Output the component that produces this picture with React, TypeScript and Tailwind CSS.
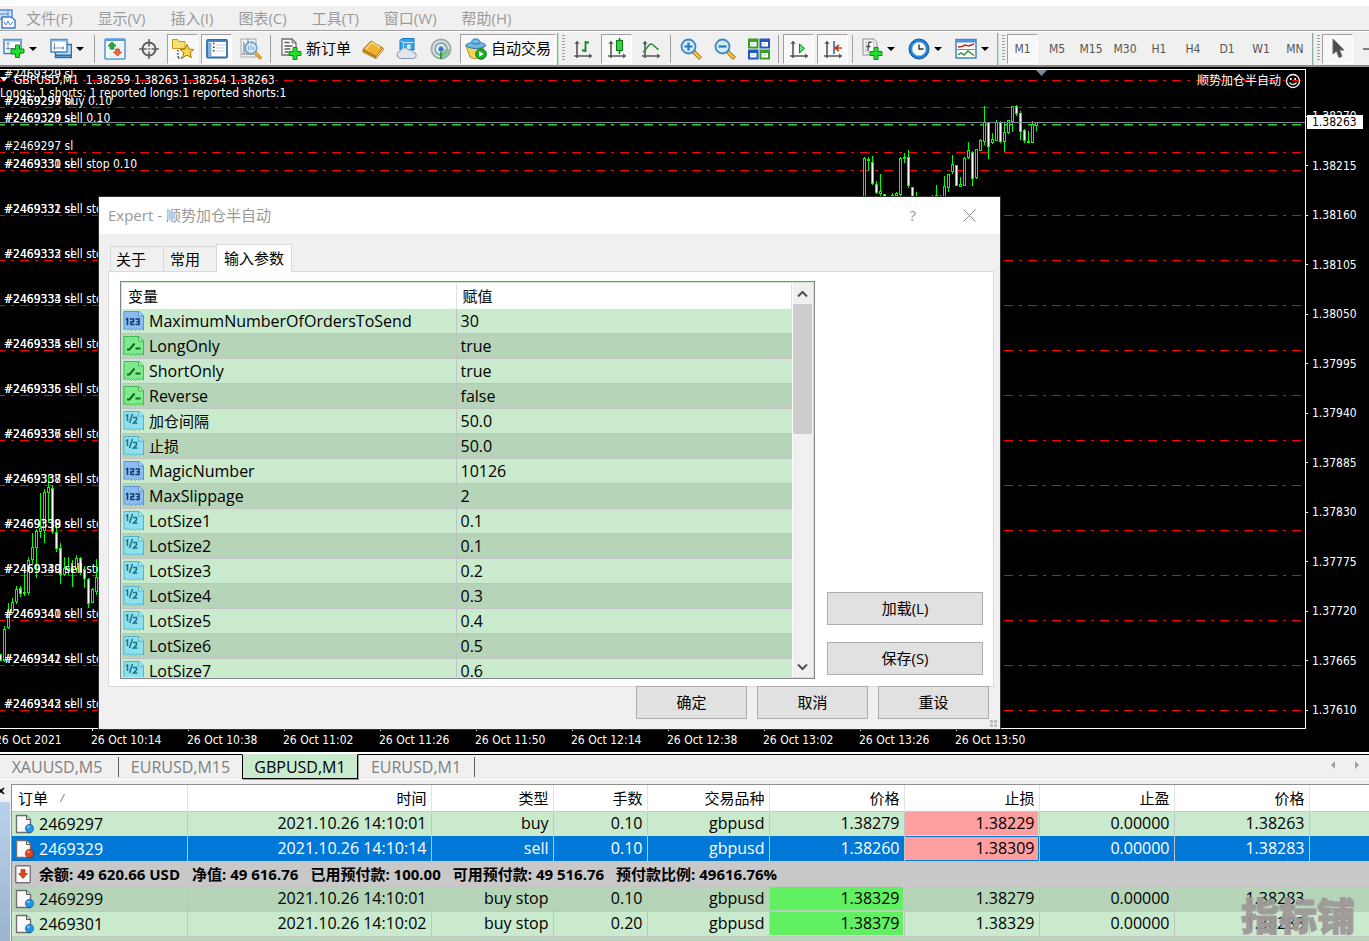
import React from "react";

const UI = "font-['Open_Sans','Noto_Sans_CJK_SC',sans-serif]";

/* ---------- toolbar icons ---------- */

function Icon({ children, label }: { children: React.ReactNode; label?: string }) {
  return (
    <svg width="22" height="22" viewBox="0 0 22 22" className="shrink-0" aria-label={label} fill="none">
      {children}
    </svg>
  );
}

function Plus({ x, y }: { x: number; y: number }) {
  return (
    <path
      transform={`translate(${x} ${y})`}
      d="M4.5 0.5h4v4h4v4h-4v4h-4v-4h-4v-4h4z"
      fill="#22dd2c"
      stroke="#0a8f14"
    />
  );
}

function Axes() {
  return (
    <g stroke="#585858" strokeWidth="1.6">
      <path d="M5 4v16M2 18h16" />
      <path d="M3 6l2-3 2 3M17 16l3 2-3 2" fill="#585858" strokeWidth="0.8" />
    </g>
  );
}

const NewChartIcon = () => (
  <Icon>
    <rect x="1" y="1.5" width="17" height="14" fill="#fff" stroke="#3a7bb8" strokeWidth="1.4" />
    <path d="M1 2.5h17" stroke="#7db5e6" strokeWidth="2" />
    <path d="M5 4.500v8M3 6.500l2-2 2 2M3 10.500h12" stroke="#6f92b5" />
    <path d="M9 13.500v-5h4.500v-4h4v4H22v4h-4.500V17h-4v-3.500z" fill="#22dd2c" stroke="#0a8f14" transform="translate(-1 2.500)" />
  </Icon>
);

const ProfilesIcon = () => (
  <Icon>
    <rect x="5.500" y="6.500" width="16" height="13" fill="#b9dbf6" stroke="#2b6cab" strokeWidth="1.4" />
    <path d="M6 17.500h15" stroke="#2b6cab" strokeWidth="2" />
    <rect x="1" y="1.500" width="16" height="12.500" fill="#fff" stroke="#3a7bb8" strokeWidth="1.4" />
    <path d="M1 2.500h16" stroke="#7db5e6" strokeWidth="2" />
    <path d="M4.500 5v7M3 10h11M12 8.500l2 1.500-2 1.500" stroke="#6f92b5" />
  </Icon>
);

const MarketWatchIcon = () => (
  <Icon>
    <rect x="1" y="1" width="20" height="20" rx="1" fill="#f7fbff" stroke="#5b9bd5" strokeWidth="1.6" />
    <path d="M1 2h20" stroke="#5b9bd5" strokeWidth="2" />
    <path d="M5 6h14M5 9h14M5 12h14M5 15h14M5 18h14" stroke="#d5e2ee" />
    <path d="M8 4l4 4H9.800v3H6.200V8H4z" fill="#25b530" stroke="#0d7d18" strokeWidth="0.8" />
    <path d="M13.500 18l4-4h-2.200v-3h-3.600v3H9.500z" fill="#f46a3a" stroke="#b93511" strokeWidth="0.8" />
  </Icon>
);

const CrosshairIcon = () => (
  <Icon>
    <circle cx="11" cy="11" r="6.500" stroke="#5e5e5e" strokeWidth="2" />
    <path d="M11 1v7.500M11 13.500V21M1 11h7.500M13.500 11H21" stroke="#5e5e5e" strokeWidth="1.600" />
    <path d="M9.500 10h3v2h-3z" fill="#9a9a9a" />
  </Icon>
);

const NavigatorIcon = () => (
  <Icon>
    <path d="M0.500 10.500V1.500h5l1.500 2h6v7z" fill="#f8df74" stroke="#c19a1c" />
    <path d="M6 12v9M6 20h5" stroke="#444" strokeDasharray="1.500 1.500" strokeWidth="1.400" />
    <path
      d="M15 6.500l2.100 4.600 4.700.5-3.600 3.300 1.200 4.800-4.400-2.500-4.400 2.500 1.200-4.800-3.600-3.300 4.700-.5z"
      fill="#f7d64b"
      stroke="#a67c08"
    />
  </Icon>
);

const TerminalIcon = () => (
  <Icon>
    <rect x="1" y="2" width="20" height="17.500" rx="1" fill="#fff" stroke="#2b6cab" strokeWidth="1.800" />
    <path d="M1.500 3.200h19" stroke="#4b8fd0" strokeWidth="1.600" />
    <path d="M2 4.500h3.500v14H2z" fill="#7fb4e4" />
    <path d="M9.500 7h9.500M9.500 10h9.500M9.500 13h9.500" stroke="#c5d0da" />
    <path d="M7 4.500h1.500v2H7z" fill="#d33" />
    <path d="M7 8.500h1.500v1.500H7zM7 12h1.500v1.500H7z" fill="#334" />
  </Icon>
);

const TesterIcon = () => (
  <Icon>
    <rect x="1" y="1" width="15" height="18" fill="#f2f2f2" stroke="#a9a9a9" />
    <path d="M4 4v11M8 1v5M12 3v4M2 16h12" stroke="#6d6d6d" />
    <circle cx="11" cy="10" r="5.800" fill="#cde9fb" fillOpacity="0.9" stroke="#6da3cf" strokeWidth="1.600" />
    <path d="M8.500 8v4M11 7v5M13.500 9v3" stroke="#7fa9c9" />
    <path d="M15.500 15l5.500 5.500" stroke="#b97f14" strokeWidth="3.200" />
    <path d="M15.500 15l5 5" stroke="#f2c44d" strokeWidth="1.400" />
  </Icon>
);

const NewOrderIcon = () => (
  <Icon>
    <path d="M2 1h10l4 4v12H2z" fill="#fff" stroke="#6c6c6c" strokeWidth="1.300" />
    <path d="M12 1v4h4" stroke="#6c6c6c" />
    <path d="M4.500 4.500h5M4.500 8h8M4.500 11h6M4.500 14h4" stroke="#5b5b5b" strokeWidth="1.300" />
    <Plus x={8.5} y={9} />
  </Icon>
);

const MetaEditorIcon = () => (
  <Icon>
    <path d="M1 11.500L9 3l12 7-7 8.500z" fill="#edb22f" stroke="#a56f0a" />
    <path d="M1 11.500l13 7v2L1 14z" fill="#d08e14" stroke="#a56f0a" strokeWidth="0.800" />
    <path d="M14 18.500l7-8.500v2.500l-7 8z" fill="#fff3c2" stroke="#a56f0a" strokeWidth="0.800" />
    <path d="M4 11l6-6.500 8 5" stroke="#f9d879" strokeWidth="1.500" />
  </Icon>
);

const CloudIcon = () => (
  <Icon>
    <path d="M4 2l3-1.500h11V12H4z" fill="#2fa3f0" stroke="#1a78c2" />
    <path d="M4.500 3l3 1.500V12" stroke="#bfe4fb" />
    <path d="M7.500 4.500h10" stroke="#bfe4fb" />
    <path d="M11 6.500h3.500V11H11z" fill="#d8f0ff" />
    <path
      d="M4.500 20.500a3.800 3.800 0 01-.3-7.500 4.500 4.500 0 018.300-1 3.500 3.500 0 014.500 2.500 3 3 0 01.5 6z"
      fill="#dfe6f0"
      stroke="#8596ad"
    />
  </Icon>
);

const SignalsIcon = () => (
  <Icon>
    <circle cx="11" cy="11" r="9.500" stroke="#9fadb0" strokeWidth="2" fill="#e6ecec" />
    <circle cx="11" cy="11" r="6" stroke="#8ba3a8" strokeWidth="1.800" />
    <path d="M11 11h9.500A9.500 9.500 0 0111 20.500z" fill="#7cc08a" fillOpacity="0.800" />
    <path d="M11 11v10" stroke="#2f9b40" strokeWidth="2" />
    <circle cx="11" cy="11" r="2.600" fill="#2f6fc4" stroke="#8fb7e6" />
  </Icon>
);

const AutoTradeIcon = () => (
  <Icon>
    <path d="M1 8l4 11c3 2 7 2 9 0l5-11z" fill="#f4d458" stroke="#b58e16" />
    <path d="M0.500 7.500C3 4 6 6 6.500 3.500 7.500 0 14 0 15 3.500c.5 2.500 4 .5 6 4-4 4-16 4-20.500 0z" fill="#6fb7e4" stroke="#2c76ab" />
    <path d="M6.500 5c2 1.500 6 1.500 8.500 0" stroke="#2c76ab" />
    <circle cx="16" cy="16" r="5.300" fill="#1fae2c" stroke="#0c7a17" />
    <path d="M14.200 13.200v5.600l4.400-2.800z" fill="#fff" />
  </Icon>
);

const BarChartIcon = () => (
  <Icon>
    <Axes />
    <path d="M13.500 3v11M13.500 4.500h3.500M10 12.500h3.500" stroke="#15832a" strokeWidth="1.800" />
  </Icon>
);
const CandleIcon = () => (
  <Icon>
    <Axes />
    <path d="M13.500 0v16" stroke="#0c7a17" strokeWidth="1.600" />
    <rect x="10.500" y="2.500" width="6" height="10" fill="#2fd43d" stroke="#0c7a17" />
  </Icon>
);
const LineChartIcon = () => (
  <Icon>
    <Axes />
    <path d="M3 14c4-2 5-8 8-8s4 4 7.500 5.500" stroke="#2a8a3a" strokeWidth="1.500" />
  </Icon>
);
const Magnifier = ({ plus }: { plus?: boolean }) => (
  <Icon>
    <path d="M13.500 13.500l7 7" stroke="#a87b12" strokeWidth="4" />
    <path d="M14 14l6 6" stroke="#f3cf4f" strokeWidth="2" />
    <circle cx="8.500" cy="8.500" r="7" fill="#d3ecfb" stroke="#4289c4" strokeWidth="1.800" />
    <path d={plus ? "M4.500 8.500h8M8.500 4.500v8" : "M4.500 8.500h8"} stroke="#2a77b8" strokeWidth="2.200" />
  </Icon>
);
const TilesIcon = () => (
  <Icon>
    <path d="M0 0.500h10.500v10H0zM11.500 11.500H22v10H11.500z" fill="#3d9f26" />
    <path d="M11.500 0.500H22v10H11.500zM0 11.500h10.500v10H0z" fill="#2357c5" />
    <path d="M2 4h6.500v4.500H2zM13.500 15H20v4.500h-6.500zM13.500 4H20v4.500h-6.500zM2 15h6.500v4.500H2z" fill="#fff" />
    <path d="M3 6h4M14.500 6h4M3 17h4M14.500 17h4" stroke="#b8c8dc" />
  </Icon>
);
const AutoScrollIcon = () => (
  <Icon>
    <Axes />
    <path d="M11.500 6v9l5-4.500z" fill="#6be276" stroke="#0c8a1c" />
  </Icon>
);
const ChartShiftIcon = () => (
  <Icon>
    <Axes />
    <path d="M12 3v13" stroke="#2c6da8" strokeWidth="1.600" />
    <path d="M20 10h-6M17 7l-4 3 4 3" stroke="#c33d12" strokeWidth="1.600" />
  </Icon>
);
const IndicatorsIcon = () => (
  <Icon>
    <path d="M2 1h11l3 3.500V17H2z" fill="#f3f3f3" stroke="#8b8b8b" />
    <path d="M5 4h8v10H5z" fill="#fff" stroke="#b9b9b9" />
    <path d="M10.500 4.500c-2-1-2.800 0-3 2L7 13M5.500 8.500h4" stroke="#444" strokeWidth="1.300" />
    <Plus x={8.5} y={9} />
  </Icon>
);
const ClockIcon = () => (
  <Icon>
    <circle cx="11" cy="11" r="10" fill="#1f7fd6" stroke="#1359a3" />
    <circle cx="11" cy="11" r="6.800" fill="#fbfbf6" stroke="#9cc9ef" />
    <path d="M11 6.500V11h4.500" stroke="#333" strokeWidth="1.400" />
  </Icon>
);
const TemplateIcon = () => (
  <Icon>
    <rect x="1" y="1.500" width="20" height="18.500" fill="#fff" stroke="#3a7bb8" strokeWidth="1.400" />
    <path d="M1 3h20" stroke="#4d94d8" strokeWidth="3" />
    <path d="M1 11.500h20" stroke="#5b9bd5" />
    <path d="M3 9l4-.5 3-1.500 4 1 5-2" stroke="#a8321b" strokeWidth="1.500" />
    <path d="M3 17l3-2 3 2 4-4 4 3 2 1.500" stroke="#2a9a39" strokeWidth="1.500" />
  </Icon>
);
const CursorIcon = () => (
  <Icon>
    <path d="M6 1v15l3.500-3 2.500 6.500 3-1.200-2.500-6.300H17z" fill="#4d4d4d" stroke="#6d6d6d" />
  </Icon>
);

/* ---------- toolbar parts ---------- */

function ToolButton({
  label,
  pressed,
  children,
}: {
  label: string;
  pressed?: boolean;
  children: React.ReactNode;
}) {
  return (
    <button
      aria-label={label}
      className={
        pressed
          ? "mr-0.5 ml-px flex h-[30px] w-[31px] shrink-0 items-center justify-center border border-t-[#a0a0a0] border-r-white border-b-white border-l-[#a0a0a0] bg-[#f8f8f8]"
          : "flex h-[30px] w-[34px] shrink-0 items-center justify-center"
      }
    >
      {children}
    </button>
  );
}

function DropButton({ label, children }: { label: string; children: React.ReactNode }) {
  return (
    <button aria-label={label} className="flex h-[30px] w-[47px] shrink-0 items-center gap-1 pl-[5px]">
      {children}
      <span className="border-x-4 border-t-4 border-x-transparent border-t-black" />
    </button>
  );
}

const Separator = () => <div className="mr-[3px] ml-0.5 h-7 w-px shrink-0 bg-[#a0a0a0]" />;

const GroupEnd = () => (
  <div className="flex h-8 w-[9px] shrink-0 items-center gap-[3px]">
    <div className="h-8 w-0.5 border-l border-[#8fae94] bg-[#c9e8cd]" />
    <div className="h-[27px] w-[3px] bg-[repeating-linear-gradient(#a0a0a0_0_1px,#f0f0f0_1px_3px)]" />
  </div>
);

const MENUS = ["文件(F)", "显示(V)", "插入(I)", "图表(C)", "工具(T)", "窗口(W)", "帮助(H)"];
const PERIODS = ["M5", "M15", "M30", "H1", "H4", "D1", "W1", "MN"];

function MenuBar() {
  return (
    <nav className="flex h-[25px] items-center border-b border-[#a0a0a0] bg-[#f0f0f0]">
      <svg width="16" height="22" viewBox="0 0 16 22" className="mr-2.5 shrink-0" fill="none">
        <rect x="-2" y="2" width="14" height="9" fill="#cfe2fb" stroke="#4f86d6" strokeWidth="1.400" />
        <path d="M0 6h8M8 3v5" stroke="#4f86d6" />
        <path d="M2 9h9l4 3v8H2z" fill="#fff" stroke="#3f77cf" strokeWidth="1.400" />
        <path d="M4 14l2 3 2-4 2 4 3-3" stroke="#4f86d6" />
      </svg>
      {MENUS.map((m) => (
        <button key={m} className="mr-[25px] text-[15px] whitespace-nowrap text-[#9b9b9b]">
          {m}
        </button>
      ))}
    </nav>
  );
}

function Toolbar() {
  return (
    <div className="-ml-0.5 flex h-[33px] items-center overflow-hidden text-black">
      <DropButton label="新图表"><NewChartIcon /></DropButton>
      <DropButton label="配置文件"><ProfilesIcon /></DropButton>
      <Separator />
      <ToolButton label="市场报价"><MarketWatchIcon /></ToolButton>
      <ToolButton label="十字线"><CrosshairIcon /></ToolButton>
      <ToolButton label="导航" pressed><NavigatorIcon /></ToolButton>
      <ToolButton label="终端" pressed><TerminalIcon /></ToolButton>
      <ToolButton label="测试"><TesterIcon /></ToolButton>
      <Separator />
      <button className="flex h-[30px] w-[82px] shrink-0 items-center gap-1 pl-1.5 text-[15px] whitespace-nowrap">
        <NewOrderIcon />
        新订单
      </button>
      <ToolButton label="编辑器"><MetaEditorIcon /></ToolButton>
      <ToolButton label="云"><CloudIcon /></ToolButton>
      <ToolButton label="信号"><SignalsIcon /></ToolButton>
      <button className="mr-px ml-0.5 flex h-[30px] w-24 shrink-0 items-center gap-1 border border-t-[#a0a0a0] border-r-white border-b-white border-l-[#a0a0a0] bg-[#f8f8f8] pl-1 text-[15px] whitespace-nowrap">
        <AutoTradeIcon />
        自动交易
      </button>
      <GroupEnd />
      <ToolButton label="柱状图"><BarChartIcon /></ToolButton>
      <ToolButton label="阴阳烛" pressed><CandleIcon /></ToolButton>
      <ToolButton label="折线图"><LineChartIcon /></ToolButton>
      <Separator />
      <ToolButton label="放大"><Magnifier plus /></ToolButton>
      <ToolButton label="缩小"><Magnifier /></ToolButton>
      <ToolButton label="平铺"><TilesIcon /></ToolButton>
      <Separator />
      <ToolButton label="自动滚动" pressed><AutoScrollIcon /></ToolButton>
      <ToolButton label="图表平移" pressed><ChartShiftIcon /></ToolButton>
      <Separator />
      <DropButton label="指标"><IndicatorsIcon /></DropButton>
      <DropButton label="周期"><ClockIcon /></DropButton>
      <DropButton label="模板"><TemplateIcon /></DropButton>
      <GroupEnd />
      <div className="flex font-['DejaVu_Sans_Condensed','DejaVu_Sans',sans-serif] text-xs text-[#555]">
        <ToolButton label="M1" pressed>M1</ToolButton>
        {PERIODS.map((p) => (
          <ToolButton key={p} label={p}>{p}</ToolButton>
        ))}
      </div>
      <GroupEnd />
      <ToolButton label="光标" pressed><CursorIcon /></ToolButton>
      <div className="ml-2 h-0.5 w-4 shrink-0 bg-[#808080]" />
    </div>
  );
}

/* ---------- chart ---------- */

// x, high, low, body top, body bottom, 1 when the candle closed lower
type Candle = [number, number, number, number, number, number];

const CANDLES: Candle[] = [
  [0, 654, 661, 654, 661, 1],
  [4, 626, 662, 629, 661, 0],
  [8, 603, 629, 612, 628, 0],
  [12, 598, 614, 602, 613, 0],
  [16, 586, 604, 589, 602, 0],
  [20, 586, 597, 588, 594, 1],
  [24, 573, 596, 592, 594, 0],
  [28, 557, 595, 560, 593, 0],
  [32, 533, 564, 547, 560, 0],
  [36, 529, 578, 531, 548, 0],
  [40, 493, 538, 528, 532, 0],
  [44, 489, 543, 492, 531, 0],
  [48, 475, 523, 487, 493, 0],
  [52, 485, 534, 488, 532, 1],
  [56, 520, 552, 532, 549, 1],
  [60, 543, 584, 548, 575, 1],
  [64, 557, 576, 568, 575, 0],
  [68, 557, 575, 568, 571, 0],
  [72, 560, 587, 568, 572, 1],
  [76, 555, 572, 558, 569, 0],
  [80, 557, 575, 558, 573, 1],
  [84, 566, 588, 569, 579, 1],
  [88, 578, 608, 579, 604, 1],
  [92, 588, 603, 589, 603, 0],
  [96, 559, 595, 577, 592, 0],
  [864, 157, 200, 158, 200, 0],
  [868, 157, 171, 159, 161, 0],
  [872, 156, 185, 162, 184, 1],
  [876, 181, 194, 184, 193, 1],
  [880, 174, 197, 191, 194, 0],
  [884, 194, 200, 194, 200, 1],
  [892, 193, 198, 195, 197, 0],
  [896, 192, 197, 193, 196, 0],
  [900, 157, 196, 158, 195, 0],
  [904, 153, 163, 157, 159, 0],
  [908, 150, 188, 157, 186, 1],
  [912, 187, 200, 187, 200, 1],
  [916, 192, 200, 196, 200, 0],
  [932, 195, 200, 196, 200, 0],
  [936, 185, 200, 195, 200, 0],
  [940, 195, 200, 196, 200, 0],
  [944, 176, 198, 186, 198, 0],
  [948, 174, 192, 174, 188, 0],
  [952, 155, 174, 164, 172, 0],
  [956, 165, 186, 165, 186, 1],
  [960, 177, 187, 184, 187, 0],
  [964, 157, 186, 158, 186, 0],
  [968, 142, 159, 150, 158, 0],
  [972, 151, 186, 152, 179, 1],
  [976, 149, 179, 149, 178, 0],
  [980, 139, 151, 140, 151, 0],
  [984, 106, 145, 122, 142, 0],
  [988, 122, 159, 122, 147, 1],
  [992, 133, 144, 139, 143, 0],
  [996, 120, 141, 122, 141, 0],
  [1000, 121, 143, 122, 142, 1],
  [1004, 123, 152, 132, 142, 0],
  [1008, 120, 134, 120, 133, 0],
  [1012, 106, 132, 106, 122, 0],
  [1016, 105, 116, 106, 114, 1],
  [1020, 111, 140, 113, 132, 1],
  [1024, 129, 143, 130, 141, 1],
  [1028, 131, 143, 141, 143, 0],
  [1032, 121, 143, 124, 143, 0],
  [1036, 122, 131, 122, 126, 0],
];

// every y below is measured from the top of the window; the plot begins at 67
const TOP = 67;
const LEVELS = [80, 107, 125, 152, 170, 215, 260, 305, 350, 395, 440, 485, 530, 575, 620, 665, 710];
const STOPS = Array.from({ length: 13 }, (_, i) => i);
const PRICES = [
  "1.38270", "1.38215", "1.38160", "1.38105", "1.38050", "1.37995", "1.37940",
  "1.37885", "1.37830", "1.37775", "1.37720", "1.37665", "1.37610",
];
const TIMES = [
  "26 Oct 2021", "26 Oct 10:14", "26 Oct 10:38", "26 Oct 11:02", "26 Oct 11:26", "26 Oct 11:50",
  "26 Oct 12:14", "26 Oct 12:38", "26 Oct 13:02", "26 Oct 13:26", "26 Oct 13:50",
];

function Plot() {
  return (
    <svg width="100%" height="100%" className="absolute inset-0" fill="white">
      <g shapeRendering="crispEdges">
        {LEVELS.map((y) => (
          <line key={y} x1="-4" x2="100%" y1={y - TOP + 0.5} y2={y - TOP + 0.5} stroke="#f00" strokeDasharray="9 6 3 6" />
        ))}
        <line x1="-4" x2="100%" y1="57.5" y2="57.5" stroke="#32cd32" strokeDasharray="9 6 3 6" />
        {CANDLES.map(([x, hi, lo, top, bot, down]) => (
          <g key={x}>
            <rect x={x} y={hi - TOP} width="1" height={lo - hi} fill="#0f0" />
            <rect x={x - 1} y={top - TOP} width="3" height={bot - top} fill="#0f0" />
            {bot - top > 2 && (
              <rect x={x} y={top - TOP + 1} width="1" height={bot - top - 2} fill={down ? "#fff" : "#000"} />
            )}
          </g>
        ))}
        <line x1="0" x2="100%" y1="55.5" y2="55.5" stroke="#778899" />
      </g>
      <path d="M1036 3h11l-5.500 6z" fill="#778899" />
      <path d="M0 10h8l-4 4.500z" />
      <g fontSize="12">
        <text x="4" y="11">#2469329 sl</text>
        <text x="14" y="17" xmlSpace="preserve">GBPUSD,M1  1.38259 1.38263 1.38254 1.38263</text>
        <text x="0" y="30">Longs: 1 shorts: 1 reported longs:1 reported shorts:1</text>
        <text x="4" y="38">#2469297 buy 0.10</text>
        <text x="4" y="38">#2469299 sl</text>
        <text x="4" y="55">#2469329 sell 0.10</text>
        <text x="4" y="55">#2469320 sl</text>
        <text x="4" y="83">#2469297 sl</text>
        {STOPS.map((i) => (
          <g key={i}>
            <text x="4" y={101 + i * 45}>{`#${2469330 + i} sell stop 0.10`}</text>
            <text x="4" y={101 + i * 45}>{`#${2469331 + i} sl`}</text>
          </g>
        ))}
      </g>
    </svg>
  );
}

function Chart() {
  return (
    <section className="relative flex min-h-[685px] flex-1 flex-col bg-black pt-0.5 font-['DejaVu_Sans_Condensed','DejaVu_Sans','Noto_Sans_CJK_SC',sans-serif] text-xs text-white">
      <div className="flex flex-1">
        <div className="relative flex-1 overflow-hidden border-y border-r border-white">
          <div className="absolute inset-x-0 -top-[3px] -bottom-px">
            <Plot />
          </div>
          <div className="absolute top-[3px] right-1 flex items-center gap-1 leading-4">
            顺势加仓半自动
            <svg width="16" height="16" viewBox="0 0 16 16" fill="none" stroke="#fff" strokeWidth="1.300">
              <circle cx="8" cy="8" r="6.500" />
              <path d="M4.500 9.500c1.500 2.500 5.500 2.500 7 0" />
              <path d="M5.800 5v2M10.200 5v2" strokeWidth="1.600" />
            </svg>
          </div>
        </div>
        <div className="relative flex w-[63px] flex-col">
          <div className="mt-[39px] flex h-[610px] flex-col justify-between">
            {PRICES.map((p) => (
              <div key={p} className="flex h-4 items-center gap-1">
                <span className="h-px w-0.5 bg-white" />
                {p}
              </div>
            ))}
          </div>
          <div className="absolute top-[46px] left-px h-3.5 w-14 bg-white pl-[5px] leading-[14px] text-black">1.38263</div>
        </div>
      </div>
      <div className="-ml-[5px] flex h-[23px] overflow-hidden">
        {TIMES.map((t) => (
          <div key={t} className="w-24 shrink-0 leading-[18px] whitespace-nowrap">
            <div className="ml-px h-0.5 w-px bg-white" />
            {t}
          </div>
        ))}
      </div>
    </section>
  );
}

/* ---------- expert dialog ---------- */

type Kind = "int" | "bool" | "real";
const PARAMS: [Kind, string, string][] = [
  ["int", "MaximumNumberOfOrdersToSend", "30"],
  ["bool", "LongOnly", "true"],
  ["bool", "ShortOnly", "true"],
  ["bool", "Reverse", "false"],
  ["real", "加仓间隔", "50.0"],
  ["real", "止损", "50.0"],
  ["int", "MagicNumber", "10126"],
  ["int", "MaxSlippage", "2"],
  ["real", "LotSize1", "0.1"],
  ["real", "LotSize2", "0.1"],
  ["real", "LotSize3", "0.2"],
  ["real", "LotSize4", "0.3"],
  ["real", "LotSize5", "0.4"],
  ["real", "LotSize6", "0.5"],
  ["real", "LotSize7", "0.6"],
];

const KIND_FILL = { int: "#8dbcf0", bool: "#7eea8c", real: "#8ee0ee" };
const KIND_EDGE = { int: "#5f93cf", bool: "#43b754", real: "#57b4c6" };

function KindIcon({ kind }: { kind: Kind }) {
  return (
    <svg width="22" height="22" viewBox="0 0 22 22" className="shrink-0">
      <path
        d="M1 1.500h15l4.500 4V20l-2-1.500-2 1.500-2-1.500-2 2-2-2-2 2-2-2-2 1.500-1.500-1.500-2 1z"
        fill={KIND_FILL[kind]}
        stroke={KIND_EDGE[kind]}
      />
      <path d="M15.500 1.500v4.500h5" fill="#fff" fillOpacity="0.400" stroke={KIND_EDGE[kind]} />
      {kind === "int" && (
        <g fill="none" stroke="#123d6e" strokeWidth="1.600">
          <path d="M3 9.500l1.500-.8V15M7 9h3.500v2.700H8V14.500h3.500M12.500 9H16v5.500h-3.500M13.500 11.800H16" />
        </g>
      )}
      {kind === "bool" && <path d="M4 14.500h2.500l5-6M12.500 13.500h5" fill="none" stroke="#0c6b1b" strokeWidth="2" />}
      {kind === "real" && (
        <path
          d="M3 6l1.500-1V11M9.500 4l-3 9M10 7.500h3.500V10l-3 3H14.500"
          fill="none"
          stroke="#1c7487"
          strokeWidth="1.500"
        />
      )}
    </svg>
  );
}

const buttonLook = "h-[33px] border border-[#adadad] bg-[#e1e1e1] text-[15px] text-black";

function Dialog() {
  return (
    <div
      role="dialog"
      aria-label="Expert - 顺势加仓半自动"
      className={`absolute top-[196px] left-[98px] flex h-[534px] w-[903px] flex-col border border-[#2d2d2d] bg-[#f0f0f0] text-[15px] text-black ${UI}`}
    >
      <header className="flex h-[37px] shrink-0 items-center bg-white pl-[9px] text-[#999]">
        <h1 className="flex-1 text-[15px]">Expert - 顺势加仓半自动</h1>
        <button className="mr-[47px] text-[15px]">?</button>
        <button aria-label="关闭" className="mr-6">
          <svg width="13" height="13" viewBox="0 0 13 13" stroke="#888">
            <path d="M0.500 0.500l12 12M12.500 0.500l-12 12" />
          </svg>
        </button>
      </header>
      <div role="tablist" className="z-10 mt-2.5 -mb-px flex shrink-0 items-end pl-[11px] leading-5">
        <button role="tab" className="h-[26px] w-[54px] border border-b-0 border-[#d9d9d9] pr-3 pb-0.5 text-center">关于</button>
        <button role="tab" className="h-[26px] w-[52px] border-t border-[#d9d9d9] pr-2.5 pb-0.5">常用</button>
        <button role="tab" aria-selected="true" className="h-7 w-[76px] border border-b-0 border-[#d9d9d9] bg-white pb-0.5">输入参数</button>
      </div>
      <div className="mr-1.5 ml-[9px] flex h-[416px] shrink-0 gap-3 border border-[#d9d9d9] bg-white pt-[9px] pr-2.5 pb-[7px] pl-[11px]">
        <div className="flex flex-1 overflow-hidden border border-[#828790] bg-[#caeacd] p-px">
          <div className="flex-1 overflow-hidden">
            <table className="w-full table-fixed border-collapse">
              <colgroup>
                <col className="w-[334px]" />
                <col />
              </colgroup>
              <thead className="bg-white">
                <tr>
                  <th className="border-r border-[#e0e0e0] p-0 text-left font-normal">
                    <div className="h-[26px] pl-1.5 leading-[26px]">变量</div>
                  </th>
                  <th className="border-r border-[#e0e0e0] p-0 text-left font-normal">
                    <div className="h-[26px] pl-1.5 leading-[26px]">赋值</div>
                  </th>
                </tr>
              </thead>
              <tbody>
                {PARAMS.map(([kind, name, value]) => (
                  <tr key={name} className="border-b border-[#c2c2c6] odd:bg-[#caeacd] even:bg-[#b5d4b8]">
                    <td className="border-r border-[#c2c2c6] p-0">
                      <div className="flex h-6 items-center gap-1 pl-px leading-6 whitespace-nowrap">
                        <KindIcon kind={kind} />
                        <span className={kind === "real" && !name.startsWith("Lot") ? "text-[15px]" : "text-base leading-6"}>
                          {name}
                        </span>
                      </div>
                    </td>
                    <td className="p-0">
                      <div className="h-6 pl-1 text-base leading-6">{value}</div>
                    </td>
                  </tr>
                ))}
              </tbody>
            </table>
          </div>
          <div className="flex w-[21px] flex-col items-center border-l border-white bg-[#f0f0f0] pr-px">
            <button aria-label="向上" className="flex h-[21px] w-full items-center justify-center">
              <svg width="11" height="8" viewBox="0 0 11 8" fill="none" stroke="#505050" strokeWidth="2">
                <path d="M1 6.500l4.500-4.500L10 6.500" />
              </svg>
            </button>
            <div className="h-[130px] w-[19px] bg-[#cdcdcd]" />
            <button aria-label="向下" className="mt-auto flex h-[21px] w-full items-center justify-center">
              <svg width="11" height="8" viewBox="0 0 11 8" fill="none" stroke="#505050" strokeWidth="2">
                <path d="M1 1.500L5.500 6 10 1.500" />
              </svg>
            </button>
          </div>
        </div>
        <div className="flex w-[156px] flex-col justify-end gap-[17px] pb-1">
          <button className={buttonLook}>加载(L)</button>
          <button className={buttonLook}>保存(S)</button>
        </div>
      </div>
      <footer className="z-10 -mt-px flex justify-end gap-2.5 pr-[11px]">
        <button className={`w-[111px] ${buttonLook}`}>确定</button>
        <button className={`w-[111px] ${buttonLook}`}>取消</button>
        <button className={`w-[111px] ${buttonLook}`}>重设</button>
      </footer>
      <svg width="8" height="8" className="absolute right-0.5 bottom-px" fill="#bfbfbf">
        <path d="M0 0h3v3H0zM4 0h3v3H4zM0 4h3v3H0zM4 4h3v3H4z" />
      </svg>
    </div>
  );
}

/* ---------- chart tabs and terminal ---------- */

function ChartTabs() {
  return (
    <div className="border-t-2 border-white">
      <div className="flex h-[26px] items-start border-t border-b border-t-black border-b-white text-base text-[#808080]">
        <button className="mt-0.5 h-5 w-[119px] border-r border-[#606060] pr-1 leading-5">XAUUSD,M5</button>
        <button className="mt-0.5 h-5 w-[123px] leading-5">EURUSD,M15</button>
        <button className="-mt-px h-[25px] w-[116px] border border-t-[#caeacd] border-black bg-[#caeacd] text-black shadow-[1px_1px_0_#a0a0a0]">
          GBPUSD,M1
        </button>
        <button className="mt-0.5 h-5 w-[117px] border-r border-[#606060] leading-5">EURUSD,M1</button>
        <div className="mt-1.5 mr-2.5 ml-auto flex gap-5">
          <button aria-label="左" className="border-y-4 border-r-4 border-y-transparent border-r-[#a0a0a0]" />
          <button aria-label="右" className="border-y-4 border-l-4 border-y-transparent border-l-[#a0a0a0]" />
        </div>
      </div>
    </div>
  );
}

const HEADERS = ["时间", "类型", "手数", "交易品种", "价格", "止损", "止盈", "价格"];
const SUMMARY = [
  "余额: 49 620.66 USD",
  "净值: 49 616.76",
  "已用预付款: 100.00",
  "可用预付款: 49 516.76",
  "预付款比例: 49616.76%",
];

type Order = { id: string; cells: string[]; dot: string; look: string; mark?: { col: number; look: string } };

const RED = { col: 5, look: "bg-[#ff9f9f] text-black" };
const GREEN = { col: 4, look: "bg-[#61f061]" };

const OPEN: Order[] = [
  {
    id: "2469297",
    cells: ["2021.10.26 14:10:01", "buy", "0.10", "gbpusd", "1.38279", "1.38229", "0.00000", "1.38263"],
    dot: "#1e96ee", look: "bg-[#caeacd]", mark: RED,
  },
  {
    id: "2469329",
    cells: ["2021.10.26 14:10:14", "sell", "0.10", "gbpusd", "1.38260", "1.38309", "0.00000", "1.38283"],
    dot: "#e0431a", look: "bg-[#0078d7] text-white border-t-[#0078d7]", mark: RED,
  },
];
const PENDING: Order[] = [
  {
    id: "2469299",
    cells: ["2021.10.26 14:10:01", "buy stop", "0.10", "gbpusd", "1.38329", "1.38279", "0.00000", "1.38283"],
    dot: "#1e96ee", look: "bg-[#b5d4b8]", mark: GREEN,
  },
  {
    id: "2469301",
    cells: ["2021.10.26 14:10:02", "buy stop", "0.20", "gbpusd", "1.38379", "1.38329", "0.00000", "1.38283"],
    dot: "#1e96ee", look: "bg-[#caeacd]", mark: GREEN,
  },
];

function DocIcon({ dot }: { dot: string }) {
  return (
    <svg width="20" height="20" viewBox="0 0 20 20" className="shrink-0">
      <path d="M1.500 1.500h10l4 4v13h-14z" fill="#fafafa" stroke="#707070" strokeWidth="1.400" />
      <path d="M11.500 1.500v4h4" fill="#ddd" stroke="#555" />
      <circle cx="14.500" cy="14.500" r="4.200" fill={dot} stroke="#00000055" />
      <circle cx="13.500" cy="13" r="1.200" fill="#fff" fillOpacity="0.500" />
    </svg>
  );
}

function OrderRow({ order }: { order: Order }) {
  return (
    <tr className={`border-t border-[#c4c4c4] text-base ${order.look}`}>
      <td className="border-r border-[#c4c4c4] p-0">
        <div className="flex h-6 items-center gap-1 pl-[3px] leading-6">
          <DocIcon dot={order.dot} />
          {order.id}
        </div>
      </td>
      {order.cells.map((c, i) => (
        <td key={i} className="border-r border-[#c4c4c4] p-0 pb-px text-right">
          <div className={`mr-px h-[23px] pr-[3px] leading-[23px] ${order.mark?.col === i ? order.mark.look : ""}`}>{c}</div>
        </td>
      ))}
      <td />
    </tr>
  );
}

function Terminal() {
  return (
    <section className="flex h-[157px] shrink-0 overflow-hidden">
      <div className="flex w-[11px] flex-col">
        <button aria-label="关闭" className="flex h-[18px] items-center pb-1">
          <svg width="8" height="8" viewBox="0 0 8 8" stroke="#000" strokeWidth="1.600" className="-ml-0.5">
            <path d="M0 1l6 6M6 1L0 7" />
          </svg>
        </button>
        <div className="mr-px flex-1 bg-linear-to-b from-[#b9d1ea] to-[#9bb4cf]" />
      </div>
      <div className="flex-1 overflow-hidden border-t border-l border-[#909090] bg-[#b5d4b8]">
        <table className="w-full table-fixed border-collapse text-[15px] whitespace-nowrap text-black">
          <colgroup>
            <col className="w-[175px]" />
            <col className="w-[244px]" />
            <col className="w-[122px]" />
            <col className="w-[94px]" />
            <col className="w-[122px]" />
            <col className="w-[135px]" />
            <col className="w-[135px]" />
            <col className="w-[135px]" />
            <col className="w-[135px]" />
            <col />
          </colgroup>
          <thead className="bg-white">
            <tr>
              <th className="border-r border-[#e2e2e2] p-0 text-left font-normal">
                <div className="flex h-[26px] items-center gap-3 pl-1.5 leading-[26px]">
                  订单
                  <svg width="5" height="8" viewBox="0 0 5 8" stroke="#777">
                    <path d="M4.500 0L0.500 8" />
                  </svg>
                </div>
              </th>
              {HEADERS.map((h, i) => (
                <th key={i} className="border-r border-[#e2e2e2] p-0 text-right font-normal">
                  <div className="h-[26px] pr-1 leading-[26px]">{h}</div>
                </th>
              ))}
              <th />
            </tr>
          </thead>
          <tbody>
            {OPEN.map((o) => <OrderRow key={o.id} order={o} />)}
            <tr className="border-t border-[#c8c8c8] bg-[#c8c8c8]">
              <td colSpan={10} className="p-0">
                <div className="flex h-6 items-center gap-3 pl-[3px] leading-6 font-bold">
                  <svg width="16" height="19" viewBox="0 0 16 19" className="-mr-1 shrink-0">
                    <rect x="0.700" y="0.700" width="14.600" height="17" rx="1" fill="#f8f8f8" stroke="#777" strokeWidth="1.400" />
                    <path d="M6 4.500h4v4h2.500L8 13.500 3.500 8.500H6z" fill="#e0431a" stroke="#9a2a0c" strokeWidth="0.600" />
                  </svg>
                  {SUMMARY.map((s) => (
                    <span key={s}>{s}</span>
                  ))}
                </div>
              </td>
            </tr>
            {PENDING.map((o) => <OrderRow key={o.id} order={o} />)}
            <tr className="h-[25px] border-t border-[#c4c4c4] bg-[#b5d4b8]">
              <td colSpan={10} />
            </tr>
          </tbody>
        </table>
      </div>
    </section>
  );
}

export default function App() {
  return (
    <div className={`relative flex h-screen flex-col overflow-hidden bg-[#f0f0f0] pt-[7px] ${UI}`}>
      <div className="absolute inset-x-0 top-0 h-1.5 bg-white" />
      <MenuBar />
      <div className="border-t border-b-2 border-t-white border-b-[#8a8a8a]">
        <Toolbar />
      </div>
      <Chart />
      <ChartTabs />
      <div className="h-1 shrink-0" />
      <Terminal />
      <Dialog />
      <div className="absolute right-3.5 bottom-1.5 text-[38px] leading-10 font-black text-[#9e9898] opacity-95 [-webkit-text-stroke:1px_#9e9898]">指标铺</div>
    </div>
  );
}
